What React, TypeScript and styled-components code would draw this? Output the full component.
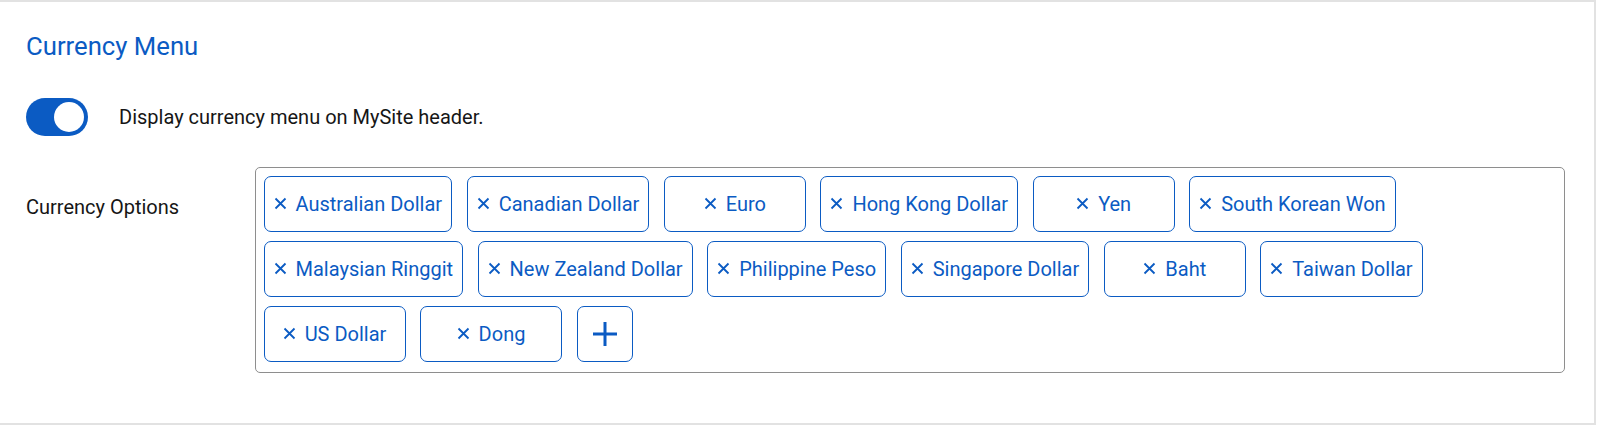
import React from "react";
import styled, { createGlobalStyle } from "styled-components";

const GlobalStyle = createGlobalStyle`
  html, body {
    margin: 0;
    padding: 0;
    background: #ffffff;
  }
  body {
    font-family: Roboto, "Noto Sans", "Liberation Sans", sans-serif;
  }
  * {
    box-sizing: border-box;
  }
`;

const BLUE = "#0b5bc3";

const currencies = [
  "Australian Dollar",
  "Canadian Dollar",
  "Euro",
  "Hong Kong Dollar",
  "Yen",
  "South Korean Won",
  "Malaysian Ringgit",
  "New Zealand Dollar",
  "Philippine Peso",
  "Singapore Dollar",
  "Baht",
  "Taiwan Dollar",
  "US Dollar",
  "Dong",
];

const Card = styled.section`
  width: 1596px;
  height: 425px;
  border-top: 2px solid #e2e2e2;
  border-right: 2px solid #e2e2e2;
  border-bottom: 2px solid #e2e2e2;
  padding: 29px 29px 0 26px;
`;

const Title = styled.h2`
  margin: 0;
  font-size: 25.7px;
  line-height: 30px;
  font-weight: 400;
  color: ${BLUE};
`;

const ToggleRow = styled.label`
  display: flex;
  align-items: center;
  gap: 31px;
  margin-top: 37px;
  height: 38px;
  cursor: pointer;
`;

const Track = styled.span<{ $on: boolean }>`
  display: flex;
  align-items: center;
  justify-content: ${(p) => (p.$on ? "flex-end" : "flex-start")};
  width: 62px;
  height: 38px;
  padding: 0 4px;
  border-radius: 19px;
  background: ${(p) => (p.$on ? BLUE : "#bdbdbd")};
`;

const Knob = styled.span`
  width: 30px;
  height: 30px;
  border-radius: 50%;
  background: #ffffff;
`;

const ToggleText = styled.span`
  font-size: 20px;
  line-height: 24px;
  color: #161616;
`;

const OptionsRow = styled.div`
  display: grid;
  grid-template-columns: 229px 1fr;
  margin-top: 31px;
`;

const FieldLabel = styled.div`
  padding-top: 28px;
  font-size: 20px;
  line-height: 24px;
  color: #161616;
`;

const TagBox = styled.div`
  display: flex;
  flex-wrap: wrap;
  align-content: flex-start;
  gap: 9px 14.5px;
  height: 206px;
  padding: 7.5px;
  border: 1.5px solid #8e8e8e;
  border-radius: 5px;
`;

const Tag = styled.button`
  display: inline-flex;
  align-items: center;
  justify-content: center;
  gap: 9px;
  min-width: 142px;
  height: 56px;
  padding: 0 9px;
  background: #ffffff;
  border: 1.5px solid ${BLUE};
  border-radius: 7px;
  font-family: inherit;
  font-size: 20px;
  color: ${BLUE};
  cursor: pointer;
`;

const AddButton = styled.button`
  display: inline-flex;
  align-items: center;
  justify-content: center;
  width: 56px;
  height: 56px;
  padding: 0;
  background: #ffffff;
  border: 1.5px solid ${BLUE};
  border-radius: 7px;
  cursor: pointer;
`;

const CrossIcon = () => (
  <svg width="13" height="13" viewBox="0 0 13 13" aria-hidden="true">
    <path d="M1.5 1.5 L11.5 11.5 M11.5 1.5 L1.5 11.5" stroke={BLUE} strokeWidth="1.8" fill="none" />
  </svg>
);

const App = () => {
  return (
    <>
      <GlobalStyle />
      <Card>
        <Title>Currency Menu</Title>
        <ToggleRow>
          <Track $on={true}>
            <Knob />
          </Track>
          <ToggleText>Display currency menu on MySite header.</ToggleText>
        </ToggleRow>
        <OptionsRow>
          <FieldLabel>Currency Options</FieldLabel>
          <TagBox>
            {currencies.map((c) => (
              <Tag key={c}>
                <CrossIcon />
                {c}
              </Tag>
            ))}
            <AddButton aria-label="Add currency">
              <svg width="26" height="26" viewBox="0 0 26 26">
                <path d="M13 1 V25 M1 13 H25" stroke={BLUE} strokeWidth="3" fill="none" />
              </svg>
            </AddButton>
          </TagBox>
        </OptionsRow>
      </Card>
    </>
  );
};

export default App;
